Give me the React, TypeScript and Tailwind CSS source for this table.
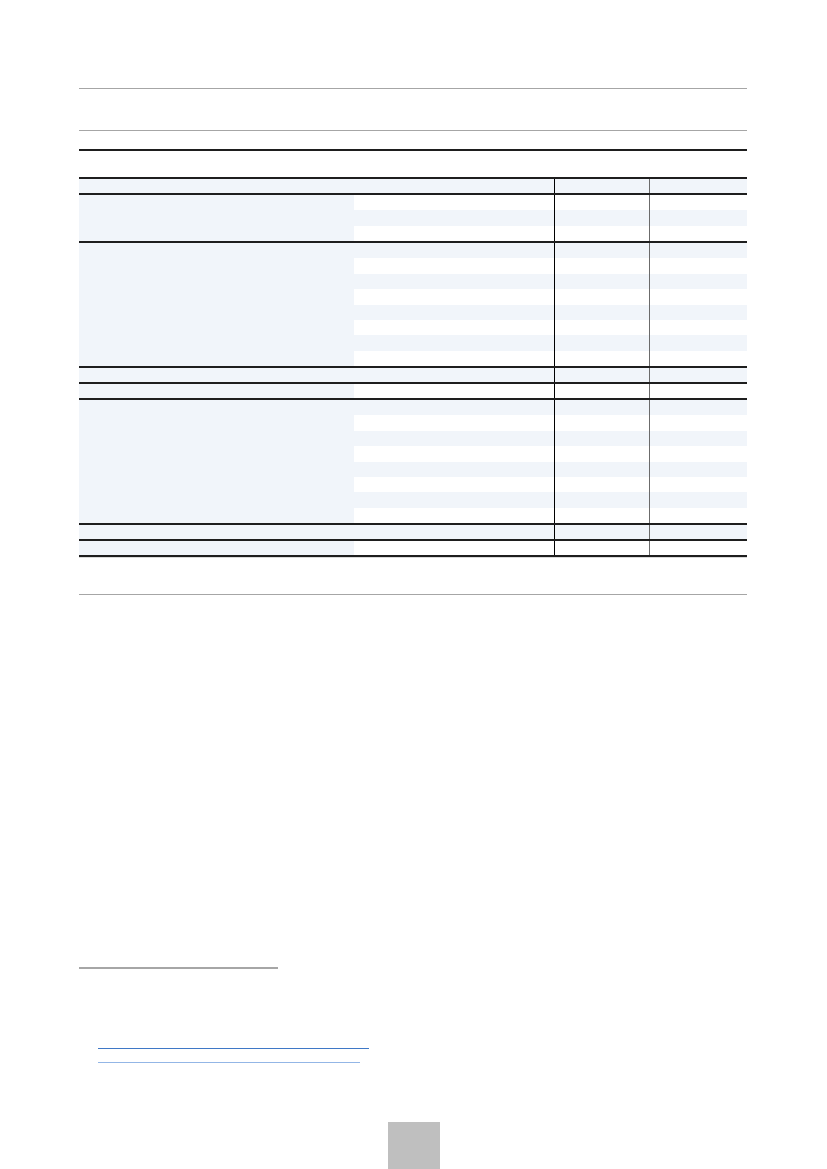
const LIGHT = "bg-[#f1f5fa]";

function Rule() {
  return <div className="h-[2px] w-full bg-[#1e1e1e]" />;
}

function Cells({ shade, h }: { shade: boolean; h: string }) {
  const bg = shade ? LIGHT : "bg-white";
  return (
    <div className={`flex ${h}`}>
      <div className={`w-[200px] ${bg}`} />
      <div className={`w-[95px] border-l border-black ${bg}`} />
      <div className={`flex-1 border-l border-[#6b6b6b] ${bg}`} />
    </div>
  );
}

function Group({ rows, firstShaded, height }: { rows: number; firstShaded: boolean; height: string }) {
  return (
    <div className={`flex ${height}`}>
      <div className={`w-[275px] ${LIGHT}`} />
      <div className="flex flex-1 flex-col">
        {Array.from({ length: rows }).map((_, i) => (
          <div key={i} className="flex-1 flex flex-col">
            <Cells shade={firstShaded ? i % 2 === 0 : i % 2 === 1} h="flex-1" />
          </div>
        ))}
      </div>
    </div>
  );
}

function FullRow() {
  return (
    <div className="flex h-[14px]">
      <div className={`w-[475px] ${LIGHT}`} />
      <div className={`w-[95px] border-l border-black ${LIGHT}`} />
      <div className={`flex-1 border-l border-[#6b6b6b] ${LIGHT}`} />
    </div>
  );
}

function SplitRow() {
  return (
    <div className="flex h-[14px]">
      <div className={`w-[275px] ${LIGHT}`} />
      <div className="w-[200px] bg-white" />
      <div className="w-[95px] border-l border-black bg-white" />
      <div className="flex-1 border-l border-[#6b6b6b] bg-white" />
    </div>
  );
}

export default function App() {
  return (
    <div className="relative min-h-[1169px] w-[827px] bg-white font-['Liberation_Sans',sans-serif]">
      <div className="ml-[79px] w-[668px] pt-[88px]">
        <div className="h-px bg-[#a6a6a6]" />
        <div className="h-[41px]" />
        <div className="h-px bg-[#a6a6a6]" />
        <div className="h-[18px]" />
        <Rule />
        <div className="h-[26px]" />

        <Rule />
        <FullRow />
        <Rule />
        <Group rows={3} firstShaded={false} height="h-[46px]" />
        <Rule />
        <Group rows={8} firstShaded={true} height="h-[123px]" />
        <Rule />
        <FullRow />
        <Rule />
        <SplitRow />
        <Rule />
        <Group rows={8} firstShaded={true} height="h-[123px]" />
        <Rule />
        <FullRow />
        <Rule />
        <SplitRow />
        <Rule />
        <div className="h-px bg-[#d9d9d9]" />

        <div className="h-[36px]" />
        <div className="h-px bg-[#a6a6a6]" />

        <div className="h-[372px]" />
        <div className="h-[2px] w-[199px] bg-[#a6a6a6]" />

        <div className="h-[79px]" />
        <div className="ml-[19px] h-px w-[271px] bg-[#3f78c6]" />
        <div className="h-[13px]" />
        <div className="ml-[19px] h-px w-[262px] bg-[#93b6e6]" />
      </div>

      <div className="absolute bottom-0 left-[388px] h-[47px] w-[52px] bg-[#bfbfbf]" />
    </div>
  );
}
